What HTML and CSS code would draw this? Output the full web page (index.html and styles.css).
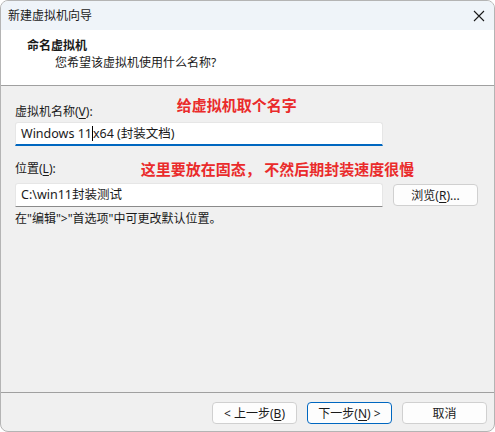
FILE: index.html
```html
<!DOCTYPE html>
<html lang="zh-CN">
<head>
    <meta charset="UTF-8">
    <title>新建虚拟机向导</title>
    <link rel="stylesheet" href="styles.css">
</head>
<body>
    <div class="window">
        <div class="titlebar">
            <span class="title">新建虚拟机向导</span>
            <svg class="close" width="12" height="12" viewBox="0 0 12 12">
                <path d="M1 1 L11 11 M11 1 L1 11" stroke="#1a1a1a" stroke-width="1.1" fill="none"/>
            </svg>
        </div>

        <div class="header">
            <div class="header-title">命名虚拟机</div>
            <div class="header-sub">您希望该虚拟机使用什么名称?</div>
        </div>

        <div class="content">
            <div class="label-row name-label">
                <span class="label">虚拟机名称(<u>V</u>):</span>
                <span class="note note-name">给虚拟机取个名字</span>
            </div>
            <div class="field-row name-field">
                <div class="input active">Windows 11<span class="caret"></span>x64 (封装文档)</div>
            </div>

            <div class="label-row path-label">
                <span class="label">位置(<u>L</u>):</span>
                <span class="note note-path">这里要放在固态， 不然后期封装速度很慢</span>
            </div>
            <div class="field-row path-field">
                <div class="input">C:\win11封装测试</div>
                <button class="btn browse">浏览(<u>R</u>)...</button>
            </div>

            <p class="hint">在"编辑"&gt;"首选项"中可更改默认位置。</p>
        </div>

        <div class="footer">
            <button class="btn">&lt; 上一步(<u>B</u>)</button>
            <button class="btn primary">下一步(<u>N</u>) &gt;</button>
            <button class="btn">取消</button>
        </div>
    </div>
</body>
</html>
```

FILE: styles.css
```css
/* 全体 */
body {
    margin: 0;
    background-color: #ffffff;
    font-family: "Noto Sans", "Noto Sans CJK SC", sans-serif;
    font-size: 12px;
    color: #1a1a1a;
}

.window {
    width: 495px;
    height: 432px;
    box-sizing: border-box;
    border: 1px solid #b4b4b4;
    border-radius: 8px;
    overflow: hidden;
    background-color: #f0f0f0;
    display: flex;
    flex-direction: column;
}

/* タイトルバー */
.titlebar {
    height: 29px;
    background-color: #eff4f9;
    display: flex;
    align-items: center;
    justify-content: space-between;
    padding: 0 9px 0 7px;
    flex-shrink: 0;
}

.title {
    font-size: 12px;
    line-height: 16px;
}

/* ヘッダー */
.header {
    height: 56px;
    box-sizing: border-box;
    background-color: #ffffff;
    border-bottom: 1px solid #a0a0a0;
    padding: 8px 0 0 26px;
    flex-shrink: 0;
}

.header-title {
    font-weight: bold;
    line-height: 16px;
}

.header-sub {
    margin-top: 1px;
    padding-left: 28px;
    line-height: 16px;
}

/* 本文 */
.content {
    flex: 1;
    padding: 0 16px 0 14px;
}

.label-row {
    display: flex;
    align-items: center;
    height: 16px;
}

.name-label {
    margin-top: 18px;
}

.name-field {
    margin-top: 2px;
}

.path-label {
    margin-top: 15px;
}

.path-field {
    margin-top: 6px;
}

.label {
    line-height: 16px;
}

u {
    text-decoration: underline;
    text-underline-offset: 2px;
}

.note {
    color: #ea2b2b;
    font-weight: bold;
    font-size: 15px;
    line-height: 18px;
    font-family: "Noto Sans CJK SC", sans-serif;
}

.note-name {
    margin-left: 84px;
    margin-top: -14px;
}

.note-path {
    margin-left: 85px;
}

.field-row {
    display: flex;
    align-items: center;
    gap: 10px;
}

.input {
    width: 368px;
    height: 24px;
    box-sizing: border-box;
    background-color: #ffffff;
    border: 1px solid #e6e6e6;
    border-bottom: 1px solid #8a8a8a;
    border-radius: 3px 3px 0 0;
    padding: 0 5px;
    line-height: 22px;
    font-size: 12.5px;
    white-space: nowrap;
}

.input.active {
    border-bottom: 2px solid #0067c0;
    line-height: 21px;
}

.caret {
    display: inline-block;
    width: 0;
    height: 15px;
    border-left: 1px solid #000000;
    vertical-align: -3px;
}

.hint {
    margin: 4px 0 0 0;
    line-height: 16px;
}

/* ボタン */
.btn {
    width: 85px;
    height: 22px;
    box-sizing: border-box;
    background-color: #fdfdfd;
    border: 1px solid #d0d0d0;
    border-radius: 4px;
    font-family: inherit;
    font-size: 12px;
    color: #1a1a1a;
    padding: 0;
}

.btn.primary {
    border-color: #0067c0;
}

.footer {
    height: 39px;
    box-sizing: border-box;
    border-top: 1px solid #a0a0a0;
    display: flex;
    justify-content: flex-end;
    gap: 10px;
    padding: 9px 7px 0 0;
    flex-shrink: 0;
}
```
